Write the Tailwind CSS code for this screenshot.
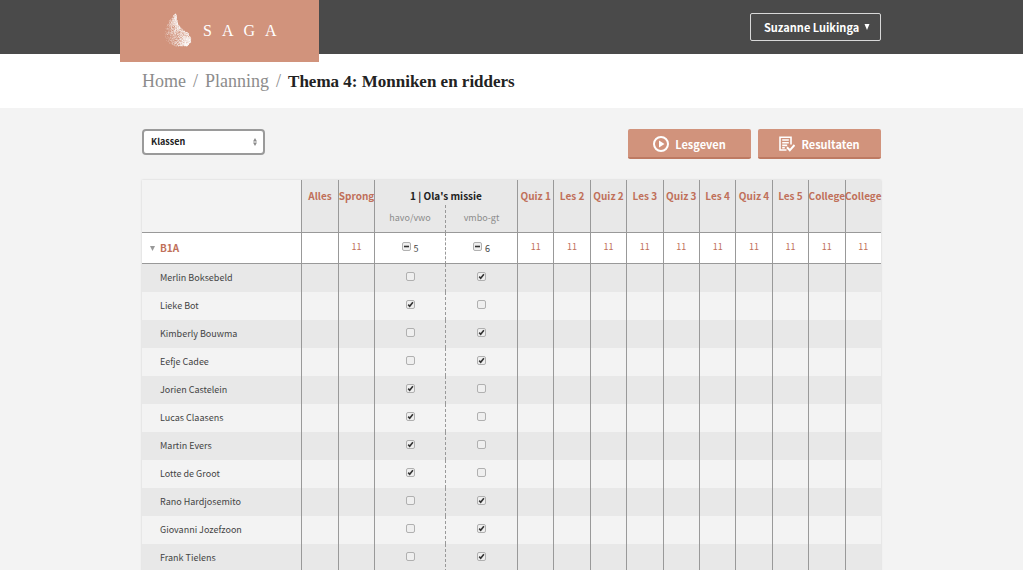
<!DOCTYPE html>
<html lang="nl">
<head>
<meta charset="utf-8">
<meta name="viewport" content="width=device-width, initial-scale=1">
<title>Saga – Thema 4: Monniken en ridders</title>
<script src="https://cdn.jsdelivr.net/npm/@tailwindcss/browser@4"></script>
</head>
<body class="min-h-screen bg-[#f3f3f3] font-['Noto_Sans_CJK_SC',sans-serif] text-[#444444]">
<header class="h-[54px] bg-[#4a4a4a]">
  <div class="mx-auto flex max-w-[783px] items-start justify-between pr-[22px]">
    <a href="#" aria-label="Saga" class="flex h-[62px] w-[199px] items-center bg-[#d1937c] pl-[42px] text-white">
      <svg id="leaf" class="h-[36px] w-[32px]" viewBox="0 0 32 36" fill="#fff" aria-hidden="true"></svg>
      <span class="ml-[9px] flex gap-[10px] font-['Liberation_Serif',serif] text-[16px] leading-[20px]"><span>S</span><span>A</span><span>G</span><span>A</span></span>
    </a>
    <button type="button" class="mt-[13px] flex h-[28px] w-[131px] items-center justify-between rounded-[2px] border border-[#d8d8d8] pr-[10px] pl-[13px] text-[11px] leading-[16px] font-bold whitespace-nowrap text-white">
      Suzanne Luikinga
      <svg class="size-[6px]" viewBox="0 0 6 6" fill="#fff" aria-hidden="true"><path d="M0.5 0h5L3 6z"/></svg>
    </button>
  </div>
</header>
<nav aria-label="Kruimelpad" class="h-[54px] bg-white">
  <ol class="mx-auto flex max-w-[739px] items-baseline gap-[7px] pt-4 font-['Liberation_Serif',serif] text-[18px] leading-[22px] text-[#8c8c8c]">
    <li><a href="#">Home</a></li><li aria-hidden="true">/</li>
    <li><a href="#">Planning</a></li><li aria-hidden="true">/</li>
    <li class="text-[17px] font-bold text-[#222222]" aria-current="page">Thema 4: Monniken en ridders</li>
  </ol>
</nav>
<main class="mx-auto max-w-[739px] pt-[21px]">
  <div class="flex items-start">
    <div class="grid w-[123px] items-center">
      <select aria-label="Klassen" class="col-start-1 row-start-1 h-[26px] w-full appearance-none rounded-[4px] border-2 border-[#9a9a9a] bg-white px-[7px] text-[9px] leading-[14px] font-bold text-[#222222]"><option>Klassen</option></select>
      <svg class="pointer-events-none col-start-1 row-start-1 mr-2 h-[8px] w-[4px] justify-self-end" viewBox="0 0 4 8" fill="#8a8a8a" aria-hidden="true"><path d="M2 0l2 3.4H0zM0 4.6h4L2 8z"/></svg>
    </div>
    <div class="ml-auto flex gap-[7px] text-[11px] leading-[16px] font-bold text-white">
      <button type="button" class="flex h-[30px] w-[123px] items-center justify-center gap-[6px] rounded-[2px] border-b-2 border-[#be7a62] bg-[#d1937c] pt-[2px]">
        <svg class="size-4" viewBox="0 0 16 16" aria-hidden="true"><circle cx="8" cy="8" r="7" fill="none" stroke="#fff" stroke-width="2"/><path d="M6 4.5v7L11.5 8z" fill="#fff"/></svg>
        Lesgeven
      </button>
      <button type="button" class="flex h-[30px] w-[123px] items-center justify-center gap-[6px] rounded-[2px] border-b-2 border-[#be7a62] bg-[#d1937c] pt-[2px]">
        <svg class="size-4" viewBox="0 0 16 16" fill="none" stroke="#fff" stroke-width="1.6" aria-hidden="true"><path d="M12 8.5V1.2H1V14h6.5M3.2 4h6.6M3.2 6.7h6.6M3.2 9.4h5M3.2 11.7h2.6"/><path d="M8 11.3l2.8 3L15.5 9" stroke-width="2"/></svg>
        Resultaten
      </button>
    </div>
  </div>
  <table class="mt-[21px] w-full table-fixed border-separate border-spacing-0 text-center text-[9px] leading-[14px] shadow-[0_0_2px_rgba(0,0,0,0.15)]">
    <colgroup><col class="w-[159px]"><col class="w-[37px]"><col class="w-[36px]"><col class="w-[71px]"><col class="w-[72px]"><col span="10"></colgroup>
    <thead id="head"></thead>
    <tbody id="body"></tbody>
  </table>
</main>
<script>
const line = 'border-l border-[#999999]';
const dash = 'border-l border-dashed border-[#999999]';
const titles = ['Quiz 1','Les 2','Quiz 2','Les 3','Quiz 3','Les 4','Quiz 4','Les 5','College','College'];
const head = t => `<th rowspan="2" scope="col" class="${line} border-b bg-[#e8e8e8] p-0 pt-[9px] align-top whitespace-nowrap"><a href="#" class="-mx-2 block text-[10px] font-bold text-[#c0705a]">${t}</a></th>`;
document.getElementById('head').innerHTML =
`<tr class="h-[25px]"><td rowspan="2" class="border-b border-[#999999]"></td>${head('Alles')}${head('Sprong')}
<th colspan="2" scope="colgroup" class="${line} bg-[#e8e8e8] p-0 pt-[9px] align-top text-[10px] font-bold text-[#222222]">1 | Ola's missie</th>${titles.map(head).join('')}</tr>
<tr class="h-[28px]"><th scope="col" class="${line} border-b bg-[#e8e8e8] p-0 pt-[6px] align-top font-normal text-[#8c8c8c]">havo/vwo</th><th scope="col" class="${dash} border-b [border-bottom-style:solid] bg-[#e8e8e8] p-0 pt-[6px] align-top font-normal text-[#8c8c8c]">vmbo-gt</th></tr>`;

const box = (label, state) => `<span class="inline-grid place-items-center align-top">
<input type="checkbox" aria-label="${label}" ${state === 'on' ? 'checked' : ''} class="col-start-1 row-start-1 size-[9px] appearance-none rounded-[2px] border border-[#b0b0b0] bg-[#efefef]">
<svg class="pointer-events-none col-start-1 row-start-1 size-[9px]" viewBox="0 0 9 9" fill="none" stroke="#333" stroke-width="1.6" aria-hidden="true">${state === 'on' ? '<path d="M2.2 4.6l1.5 1.7L6.9 2.2"/>' : state === 'mixed' ? '<path d="M2 4.5h5"/>' : ''}</svg></span>`;
const count = c => `<td class="${c}"></td>`;
const group = (n, l, cls) => `<td class="${cls} border-b [border-bottom-style:solid] p-0 pt-[7px] align-top"><span class="inline-flex gap-[3px]"><span class="leading-none">${box('Hele klas ' + l, 'mixed')}</span>${n}</span></td>`;
const total = t => `<td class="${line} border-b p-0 pt-[7px] align-top text-[#c0705a]">${t}</td>`;
const pupils = [['Merlin Boksebeld',1],['Lieke Bot',0],['Kimberly Bouwma',1],['Eefje Cadee',1],['Jorien Castelein',0],['Lucas Claasens',0],['Martin Evers',0],['Lotte de Groot',0],['Rano Hardjosemito',1],['Giovanni Jozefzoon',1],['Frank Tielens',1]];
document.getElementById('body').innerHTML =
`<tr class="h-[31px] bg-white"><th scope="row" class="border-b border-[#999999] p-0 pl-[8px] text-left"><button type="button" aria-expanded="true" class="flex items-center gap-[5px] text-[10px] font-bold text-[#c0705a]"><svg class="size-[5px]" viewBox="0 0 5 5" fill="#999" aria-hidden="true"><path d="M0 0h5L2.5 5z"/></svg>B1A</button></th>
${total('')}${total('11')}${group(5, 'havo/vwo', line)}${group(6, 'vmbo-gt', dash)}${titles.map(() => total('11')).join('')}</tr>` +
pupils.map(([name, gt]) => `<tr class="h-[28px] odd:bg-[#f3f3f3] even:bg-[#e8e8e8]"><th scope="row" class="p-0 pl-[18px] text-left font-normal whitespace-nowrap">${name}</th>${count(line)}${count(line)}
<td class="${line} p-0 pt-2 align-top leading-none">${box(name + ' havo/vwo', gt ? '' : 'on')}</td><td class="${dash} p-0 pt-2 align-top leading-none">${box(name + ' vmbo-gt', gt ? 'on' : '')}</td>${titles.map(() => count(line)).join('')}</tr>`).join('');

// Stippled feather: each row gives y and its left and right edge; dots thicken towards the right.
const rows = [[1,12,14],[6,8,15],[11,5,16],[16,3,20],[20,2,26],[25,3,29],[29,5,29],[33,12,25]];
let seed = 7;
const rnd = () => (seed = (seed * 16807) % 2147483647) / 2147483647;
let dots = '';
for (let i = 0; i < 1300; i++) {
  const y = 1 + 32 * Math.pow(rnd(), 0.62);
  const k = Math.max(0, rows.findIndex(r => r[0] >= y) - 1);
  const [a, b] = [rows[k], rows[k + 1]], f = (y - a[0]) / (b[0] - a[0]);
  const l = a[1] + f * (b[1] - a[1]), r = a[2] + f * (b[2] - a[2]);
  const s = Math.pow(rnd(), 0.65);
  dots += `<circle cx="${(l + s * (r - l)).toFixed(1)}" cy="${y.toFixed(1)}" r="${(0.2 + 0.22 * s).toFixed(2)}"/>`;
}
document.getElementById('leaf').innerHTML = dots;
</script>
</body>
</html>
